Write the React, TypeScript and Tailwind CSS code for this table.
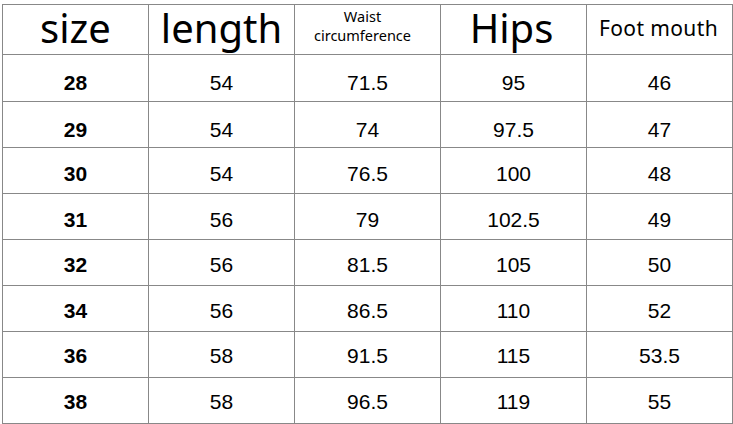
import React from "react";

const rows = [
  ["28", "54", "71.5", "95", "46"],
  ["29", "54", "74", "97.5", "47"],
  ["30", "54", "76.5", "100", "48"],
  ["31", "56", "79", "102.5", "49"],
  ["32", "56", "81.5", "105", "50"],
  ["34", "56", "86.5", "110", "52"],
  ["36", "58", "91.5", "115", "53.5"],
  ["38", "58", "96.5", "119", "55"],
];

const rowCls = [
  "h-[47px] pt-[9px]",
  "h-[46px] pt-[9px]",
  "h-[46px] pt-[5px]",
  "h-[46px] pt-[5px]",
  "h-[46px] pt-[3px]",
  "h-[46px] pt-[3px]",
  "h-[46px] pt-[1px]",
  "h-[45px] pt-[1px]",
];

export default function App() {
  return (
    <div className="w-[733px] h-[424px] bg-white pl-[2px] pt-[4px]">
      <div className="w-[731px] border border-[#888] grid grid-cols-[146px_146px_146px_146px_145px] text-black">
        <div className="h-[50px] border-r border-b border-[#888] flex items-center justify-center text-[40px] leading-none pb-[4px] [font-family:'Noto_Sans',sans-serif]">size</div>
        <div className="h-[50px] border-r border-b border-[#888] flex items-center justify-center text-[40px] leading-none pb-[4px] [font-family:'Noto_Sans',sans-serif]">length</div>
        <div className="h-[50px] border-r border-b border-[#888] flex flex-col items-center justify-center gap-[2px] text-[14.5px] leading-[17px] pb-[7px] pr-[10px] [font-family:'Noto_Sans',sans-serif]">
          <span>Waist</span>
          <span>circumference</span>
        </div>
        <div className="h-[50px] border-r border-b border-[#888] flex items-center justify-center text-[40px] leading-none pb-[4px] pr-[4px] [font-family:'Noto_Sans',sans-serif]">Hips</div>
        <div className="h-[50px] border-b border-[#888] flex items-center justify-center text-[21px] tracking-[0.4px] leading-none pb-[2px] pr-[2px] [font-family:'Noto_Sans',sans-serif]">Foot mouth</div>
        {rows.map((r, i) =>
          r.map((c, j) => (
            <div
              key={i + "-" + j}
              className={
                rowCls[i] +
                " flex items-center justify-center text-[21px] leading-none [font-family:'Liberation_Sans',Arial,sans-serif] " +
                (j < 4 ? "border-r border-[#888] " : "") +
                (i < rows.length - 1 ? "border-b border-[#888] " : "") +
                (j === 0 ? "font-bold" : "")
              }
            >
              {c}
            </div>
          ))
        )}
      </div>
    </div>
  );
}
